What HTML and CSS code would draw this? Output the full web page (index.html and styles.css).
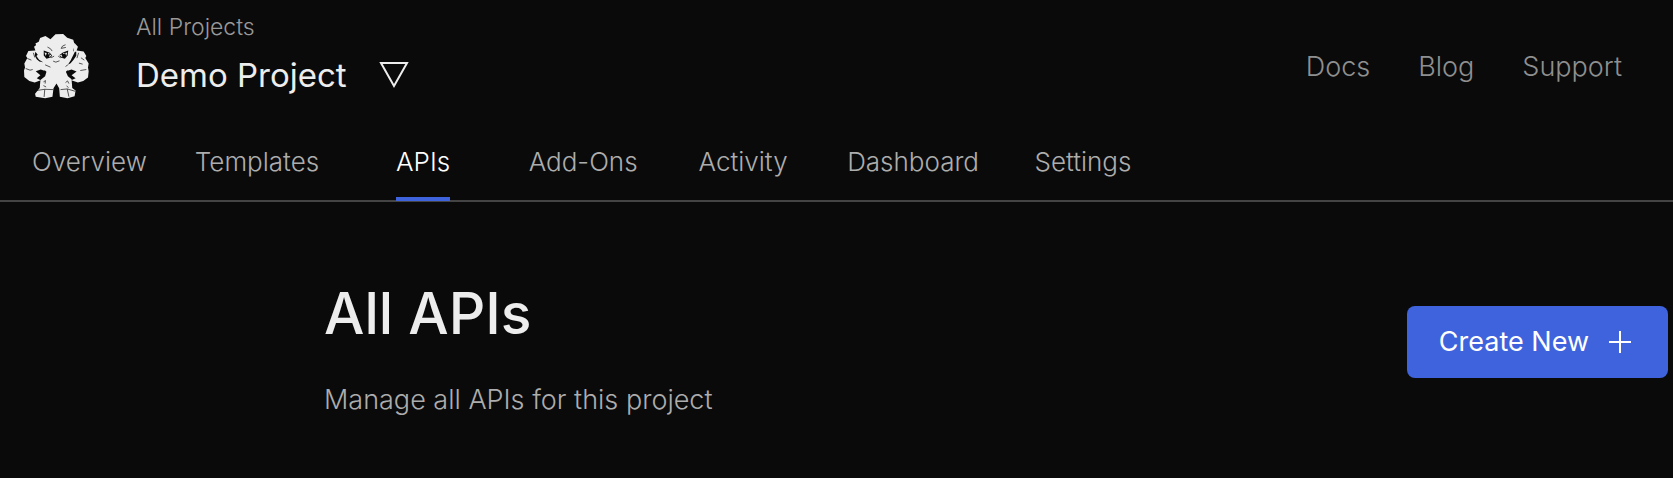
FILE: index.html
```
<!DOCTYPE html>
<html lang="en">
<head>
    <meta charset="UTF-8">
    <title>Demo Project - APIs</title>
    <meta name="viewport" content="width=device-width, initial-scale=1.0">
    <link rel="stylesheet" href="styles.css">
</head>
<body>
<header class="header">
    <a class="logo" href="#" aria-label="Home">
        <svg viewBox="42 42 194 194" aria-hidden="true">
            <!-- arms -->
            <path class="light" d="M84 70 L72 80 L76 91 L55 93 L48 108 L52 114 L43 130 L45 142 L42 151 L43 170 L58 182 L74 187 L92 180 L80 174 L91 165 L77 153 L92 148 L103 152 L112 128 L88 110 Z"/>
            <path class="light" d="M192 68 L203 80 L199 91 L220 94 L228 108 L225 114 L235 130 L233 142 L235 153 L233 172 L219 182 L203 187 L183 180 L196 174 L184 165 L199 154 L184 148 L172 152 L165 128 L188 110 Z"/>
            <!-- body and legs -->
            <path class="light" d="M104 122 L172 122 L176 146 L167 155 L173 168 L184 177 L186 203 L196 211 L193 228 L172 234 L149 229 L147 204 L139 190 L130 204 L127 229 L105 234 L77 229 L75 220 L89 203 L91 179 L105 168 L109 155 L99 146 Z"/>
            <!-- head -->
            <path class="light" d="M90 54 L106 48 L121 58 L136 43 L159 42 L171 53 L189 59 L194 77 L188 91 L195 101 L187 117 L177 125 L171 137 L154 140 L139 146 L121 138 L105 134 L99 122 L86 115 L80 99 L82 83 L76 70 L86 65 Z"/>
            <!-- face -->
            <path class="dark" d="M101 91 L119 98 L126 106 L122 112 L109 116 L101 106 Z"/>
            <path class="dark" d="M174 91 L158 97 L148 105 L151 112 L164 116 L172 106 Z"/>
            <path class="light" d="M103 97 L110 99 L107 108 Z M119 103 L124 106 L117 112 Z M171 97 L165 99 L168 108 Z M154 103 L149 106 L157 112 Z"/>
            <circle class="light" cx="116" cy="101" r="2"/>
            <circle class="light" cx="161" cy="100" r="2"/>
            <path class="line" d="M112 81 L121 86 L126 93 M153 85 L157 78 L166 74 M153 85 L167 82 M123 113 L132 108 M144 108 L151 113 M129 123 L137 126 L148 122"/>
            <!-- shading between the parts -->
            <path class="dark" d="M76 95 L83 104 L79 108 L87 119 L99 126 L88 124 L80 117 L74 106 Z M194 95 L198 95 L198 107 L190 119 L181 129 L173 134 L181 121 Z"/>
            <path class="line" d="M70 98 L74 112 M52 115 L64 120 M47 145 L60 150 L68 148 M205 98 L200 114 M212 113 L222 120 M206 129 L217 132 M228 148 L210 151 M105 134 L121 141 M173 134 L166 139"/>
            <path class="line" d="M77 211 L104 207 L102 230 M104 207 L129 208 M151 208 L171 206 L176 229 M171 206 L195 213 M100 185 L106 181 L105 190 M166 187 L172 182 L176 190 M100 196 L108 200 M169 197 L175 202"/>
        </svg>
    </a>
    <div class="project">
        <a class="all-projects" href="#">All Projects</a>
        <button class="project-switch" type="button">
            Demo Project
            <svg class="triangle" viewBox="0 0 30 28" aria-hidden="true">
                <path d="M2 2 H28 L15 25 Z"/>
            </svg>
        </button>
    </div>
    <nav class="links">
        <a href="#">Docs</a>
        <a href="#">Blog</a>
        <a href="#">Support</a>
    </nav>
</header>

<nav class="tabs">
    <a class="tab" href="#"><span>Overview</span></a>
    <a class="tab" href="#"><span>Templates</span></a>
    <a class="tab active" href="#"><span>APIs</span></a>
    <a class="tab" href="#"><span>Add-Ons</span></a>
    <a class="tab" href="#"><span>Activity</span></a>
    <a class="tab" href="#"><span>Dashboard</span></a>
    <a class="tab" href="#"><span>Settings</span></a>
</nav>

<main class="content">
    <div class="intro">
        <h1>All APIs</h1>
        <p>Manage all APIs for this project</p>
    </div>
    <button class="create" type="button">
        Create New
        <svg class="plus" viewBox="0 0 22 22" aria-hidden="true">
            <path d="M11 0 V22 M0 11 H22"/>
        </svg>
    </button>
</main>
</body>
</html>
```
FILE: styles.css
```
* {
    box-sizing: border-box;
}

body {
    background-color: #0a0a0a;
    color: #ededed;
    font-family: Inter, "Liberation Sans", sans-serif;
    font-size: 27px;
    font-weight: 300;
    line-height: 32px;
    margin: 0;
}

a {
    color: inherit;
    text-decoration: none;
}

button {
    border: none;
    color: inherit;
    cursor: pointer;
    font: inherit;
}

.header {
    display: flex;
    align-items: flex-start;
    padding: 13px 51px 0 24px;
}

.logo {
    width: 65px;
    margin: 21px 47px 0 0;
}

.logo svg {
    display: block;
    width: 100%;
}

.light {
    fill: #ededed;
}

.dark {
    fill: #0a0a0a;
}

.line {
    fill: none;
    stroke: #0a0a0a;
    stroke-width: 2;
}

.project {
    display: flex;
    flex-direction: column;
    align-items: flex-start;
    gap: 12px;
}

.all-projects {
    color: #999;
    font-size: 23px;
    line-height: 28px;
}

.project-switch {
    display: flex;
    align-items: center;
    gap: 32px;
    padding: 0;
    background: none;
    font-size: 33px;
    font-weight: 400;
    line-height: 44px;
}

.triangle {
    width: 30px;
    height: 28px;
    fill: none;
    stroke: #ededed;
    stroke-width: 2;
}

.links {
    display: flex;
    gap: 48px;
    margin: 38px 0 0 auto;
    color: #8f8f8f;
}

.tabs {
    display: flex;
    gap: 48px;
    margin-top: 47px;
    padding-left: 32px;
    border-bottom: 2px solid #444;
    color: #adadad;
    font-size: 26px;
}

.tab {
    min-width: 112px;
    text-align: center;
}

.tab span {
    display: inline-block;
    padding-bottom: 19px;
    margin-bottom: -1px;
    border-bottom: 4px solid transparent;
}

.active {
    color: #fff;
}

.active span {
    border-color: #3e63dd;
}

.content {
    display: flex;
    justify-content: space-between;
    align-items: flex-start;
    padding: 76px 5px 62px 324px;
}

h1 {
    margin: 0 0 34px;
    font-size: 57px;
    font-weight: 500;
    line-height: 72px;
}

p {
    margin: 0;
    color: #adadad;
}

.create {
    display: flex;
    align-items: center;
    gap: 20px;
    margin-top: 28px;
    padding: 20px 37px 20px 32px;
    border-radius: 8px;
    background-color: #3e63dd;
    color: #fff;
    font-weight: 400;
}

.plus {
    width: 22px;
    height: 22px;
    stroke: #fff;
    stroke-width: 2;
}
```
